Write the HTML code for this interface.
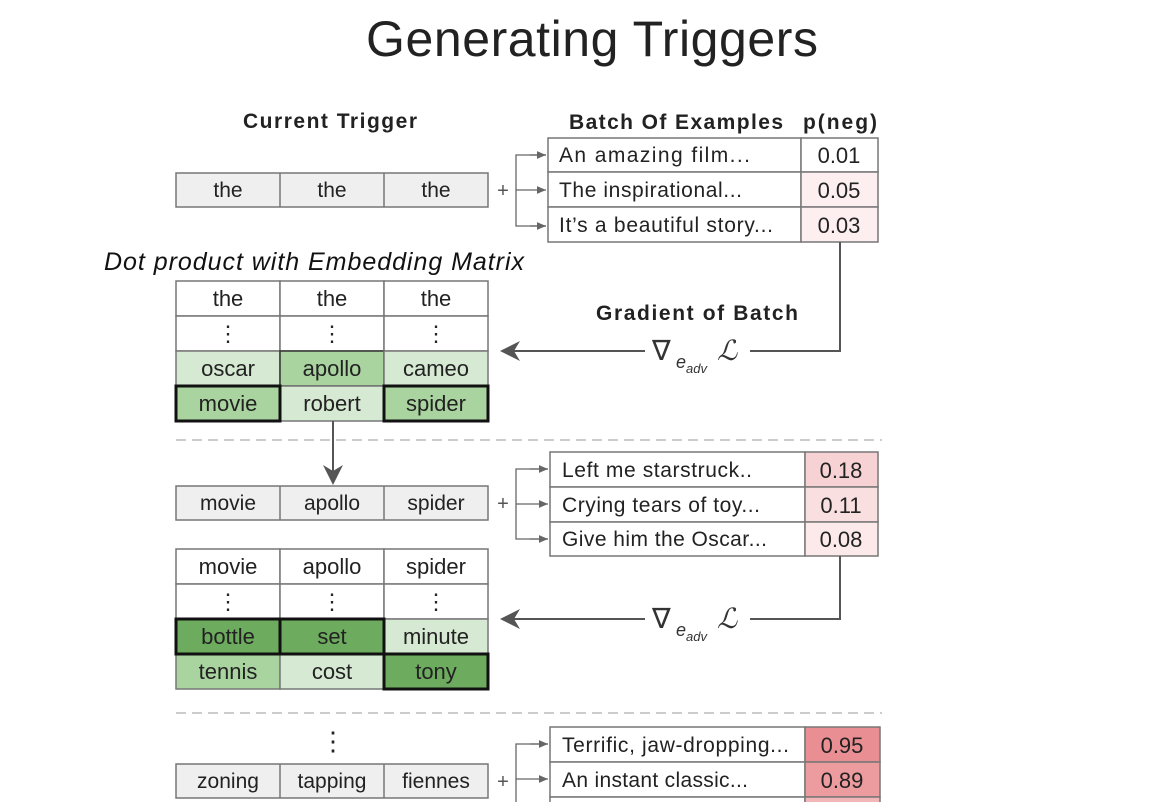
<!DOCTYPE html>
<html><head><meta charset="utf-8"><style>
html,body{margin:0;padding:0;background:#fff;width:1174px;height:802px;overflow:hidden}
svg text{font-family:"Liberation Sans Narrow","Liberation Sans",sans-serif}
</style></head><body>
<svg width="1174" height="802" viewBox="0 0 1174 802" xmlns="http://www.w3.org/2000/svg">
<defs><marker id="ah" markerWidth="8" markerHeight="8" refX="7" refY="4" orient="auto"><path d="M0,1 L7,4 L0,7 Z" fill="#666"/></marker>
<marker id="bh" markerWidth="10" markerHeight="10" refX="9" refY="5" orient="auto"><path d="M0,0 L10,5 L0,10 L3,5 Z" fill="#555"/></marker></defs>
<text x="592" y="56" font-size="50" text-anchor="middle" textLength="452" style="font-family:'Liberation Sans',sans-serif" fill="#222">Generating Triggers</text>

<g font-size="21" text-anchor="middle" fill="#222">
<text x="330" y="128" font-weight="bold" textLength="174">Current Trigger</text>
<text x="676" y="129" font-weight="bold" textLength="214">Batch Of Examples</text>
<text x="840" y="129" font-weight="bold" textLength="74">p(neg)</text>
<text x="697" y="320" font-weight="bold" textLength="202">Gradient of Batch</text>
</g>
<text x="104" y="270" font-size="25" font-style="italic" fill="#111" textLength="420">Dot product with Embedding Matrix</text>

<g stroke="#777" stroke-width="1.5" font-size="21" text-anchor="middle" fill="#222">
<rect x="176" y="173" width="312" height="34" fill="#efefef"/>
<line x1="280" y1="173" x2="280" y2="207"/><line x1="384" y1="173" x2="384" y2="207"/>
<rect x="176" y="486" width="312" height="34" fill="#efefef"/>
<line x1="280" y1="486" x2="280" y2="520"/><line x1="384" y1="486" x2="384" y2="520"/>
<rect x="176" y="764" width="312" height="34" fill="#efefef"/>
<line x1="280" y1="764" x2="280" y2="798"/><line x1="384" y1="764" x2="384" y2="798"/>
</g>
<g font-size="21" text-anchor="middle" fill="#222">
<text x="228" y="197">the</text><text x="332" y="197">the</text><text x="436" y="197">the</text>
<text x="228" y="510">movie</text><text x="332" y="510">apollo</text><text x="436" y="510">spider</text>
<text x="228" y="788">zoning</text><text x="332" y="788">tapping</text><text x="436" y="788">fiennes</text>
</g>

<g stroke="#777" stroke-width="1.5">
<rect x="176" y="281" width="104" height="35" fill="#fff"/><rect x="280" y="281" width="104" height="35" fill="#fff"/><rect x="384" y="281" width="104" height="35" fill="#fff"/>
<rect x="176" y="316" width="104" height="35" fill="#fff"/><rect x="280" y="316" width="104" height="35" fill="#fff"/><rect x="384" y="316" width="104" height="35" fill="#fff"/>
<rect x="176" y="351" width="104" height="35" fill="#d6e9d2"/><rect x="280" y="351" width="104" height="35" fill="#a9d49f" stroke="#333"/><rect x="384" y="351" width="104" height="35" fill="#d6e9d2"/>
<rect x="280" y="386" width="104" height="35" fill="#d6e9d2"/>
<rect x="176" y="386" width="104" height="35" fill="#a9d49f" stroke="#111" stroke-width="3"/>
<rect x="384" y="386" width="104" height="35" fill="#a9d49f" stroke="#111" stroke-width="3"/>
</g>
<g font-size="22" text-anchor="middle" fill="#222">
<text x="228" y="306">the</text><text x="332" y="306">the</text><text x="436" y="306">the</text>
<text x="228" y="341">⋮</text><text x="332" y="341">⋮</text><text x="436" y="341">⋮</text>
<text x="228" y="376">oscar</text><text x="332" y="376">apollo</text><text x="436" y="376">cameo</text>
<text x="228" y="411">movie</text><text x="332" y="411">robert</text><text x="436" y="411">spider</text>
</g>

<g stroke="#777" stroke-width="1.5">
<rect x="176" y="549" width="104" height="35" fill="#fff"/><rect x="280" y="549" width="104" height="35" fill="#fff"/><rect x="384" y="549" width="104" height="35" fill="#fff"/>
<rect x="176" y="584" width="104" height="35" fill="#fff"/><rect x="280" y="584" width="104" height="35" fill="#fff"/><rect x="384" y="584" width="104" height="35" fill="#fff"/>
<rect x="384" y="619" width="104" height="35" fill="#d6e9d2"/>
<rect x="176" y="654" width="104" height="35" fill="#a9d49f"/><rect x="280" y="654" width="104" height="35" fill="#d6e9d2"/>
<rect x="176" y="619" width="104" height="35" fill="#6dac5f" stroke="#111" stroke-width="3"/>
<rect x="280" y="619" width="104" height="35" fill="#6dac5f" stroke="#111" stroke-width="3"/>
<rect x="384" y="654" width="104" height="35" fill="#6dac5f" stroke="#111" stroke-width="3"/>
</g>
<g font-size="22" text-anchor="middle" fill="#222">
<text x="228" y="574">movie</text><text x="332" y="574">apollo</text><text x="436" y="574">spider</text>
<text x="228" y="609">⋮</text><text x="332" y="609">⋮</text><text x="436" y="609">⋮</text>
<text x="228" y="644">bottle</text><text x="332" y="644">set</text><text x="436" y="644">minute</text>
<text x="228" y="679">tennis</text><text x="332" y="679">cost</text><text x="436" y="679">tony</text>
<text x="333" y="750" font-size="26">⋮</text>
</g>

<g font-size="20" fill="#555" text-anchor="middle"><text x="503" y="197">+</text><text x="503" y="510">+</text><text x="503" y="788">+</text></g>
<g stroke="#666" stroke-width="1.3" fill="none">
<path d="M546,155 H516 V226 H546"/><line x1="516" y1="190" x2="546" y2="190" marker-end="url(#ah)"/>
<line x1="530" y1="155" x2="546" y2="155" marker-end="url(#ah)"/><line x1="530" y1="226" x2="546" y2="226" marker-end="url(#ah)"/>
<path d="M548,469 H516 V539 H548"/><line x1="516" y1="504" x2="548" y2="504" marker-end="url(#ah)"/>
<line x1="530" y1="469" x2="548" y2="469" marker-end="url(#ah)"/><line x1="530" y1="539" x2="548" y2="539" marker-end="url(#ah)"/>
<path d="M548,744 H516 V802"/><line x1="516" y1="779" x2="548" y2="779" marker-end="url(#ah)"/>
<line x1="530" y1="744" x2="548" y2="744" marker-end="url(#ah)"/>
</g>

<g stroke="#777" stroke-width="1.5">
<rect x="548" y="138" width="253" height="34" fill="#fff"/><rect x="801" y="138" width="77" height="34" fill="#fff"/>
<rect x="548" y="172" width="253" height="35" fill="#fff"/><rect x="801" y="172" width="77" height="35" fill="#fdeef0"/>
<rect x="548" y="207" width="253" height="35" fill="#fff"/><rect x="801" y="207" width="77" height="35" fill="#fdeef0"/>
<rect x="550" y="452" width="255" height="35" fill="#fff"/><rect x="805" y="452" width="73" height="35" fill="#f7d2d4"/>
<rect x="550" y="487" width="255" height="35" fill="#fff"/><rect x="805" y="487" width="73" height="35" fill="#fadfe1"/>
<rect x="550" y="522" width="255" height="34" fill="#fff"/><rect x="805" y="522" width="73" height="34" fill="#fce9ea"/>
<rect x="550" y="727" width="255" height="35" fill="#fff"/><rect x="805" y="727" width="75" height="35" fill="#e98f93"/>
<rect x="550" y="762" width="255" height="35" fill="#fff"/><rect x="805" y="762" width="75" height="35" fill="#ec9b9e"/>
<rect x="550" y="797" width="255" height="35" fill="#fff"/><rect x="805" y="797" width="75" height="35" fill="#f2b6b8"/>
</g>
<g font-size="21" fill="#222">
<text x="559" y="162" textLength="191">An amazing film...</text><text x="559" y="197" textLength="183">The inspirational...</text><text x="559" y="232" textLength="214">It’s a beautiful story...</text>
<text x="562" y="477" textLength="190">Left me starstruck..</text><text x="562" y="512" textLength="198">Crying tears of toy...</text><text x="562" y="546" textLength="205">Give him the Oscar...</text>
<text x="562" y="752" textLength="227">Terrific, jaw-dropping...</text><text x="562" y="787" textLength="186">An instant classic...</text>
</g>
<g font-size="22" fill="#222" text-anchor="middle">
<text x="839" y="163">0.01</text><text x="839" y="198">0.05</text><text x="839" y="233">0.03</text>
<text x="841" y="478">0.18</text><text x="841" y="513">0.11</text><text x="841" y="547">0.08</text>
<text x="842" y="753">0.95</text><text x="842" y="788">0.89</text>
</g>

<g stroke="#555" stroke-width="2" fill="none">
<path d="M840,242 V351 H750"/><line x1="645" y1="351" x2="502" y2="351" marker-end="url(#bh)"/>
<path d="M840,556 V619 H750"/><line x1="645" y1="619" x2="502" y2="619" marker-end="url(#bh)"/>
<line x1="333" y1="421" x2="333" y2="483" marker-end="url(#bh)"/>
</g>
<g fill="#333" style="font-family:'Liberation Serif',serif">
<text x="652" y="360" font-size="28">∇</text><text x="676" y="368" font-size="18" font-style="italic">e</text><text x="686" y="373" font-size="13" font-style="italic">adv</text><text x="717" y="360" font-size="28" font-style="italic">ℒ</text>
<text x="652" y="628" font-size="28">∇</text><text x="676" y="636" font-size="18" font-style="italic">e</text><text x="686" y="641" font-size="13" font-style="italic">adv</text><text x="717" y="628" font-size="28" font-style="italic">ℒ</text>
</g>

<g stroke="#ccc" stroke-width="2" stroke-dasharray="10,6">
<line x1="176" y1="440" x2="882" y2="440"/><line x1="176" y1="713" x2="882" y2="713"/>
</g>
</svg>
</body></html>
